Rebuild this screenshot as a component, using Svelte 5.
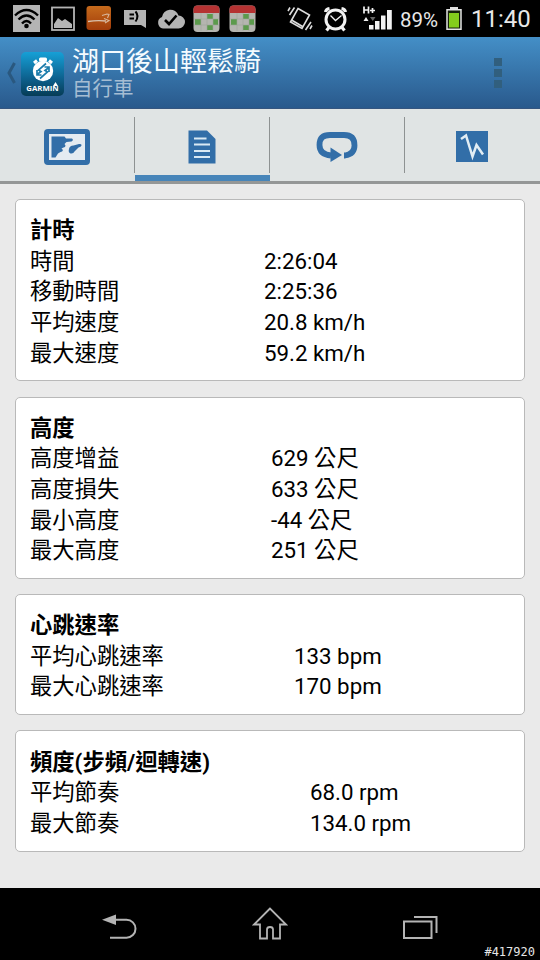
<script lang="ts">
	type Section = {
		title: string;
		labelWidth: number;
		rows: [string, string][];
	};

	const sections: Section[] = [
		{
			title: '計時',
			labelWidth: 234,
			rows: [
				['時間', '2:26:04'],
				['移動時間', '2:25:36'],
				['平均速度', '20.8 km/h'],
				['最大速度', '59.2 km/h'],
			],
		},
		{
			title: '高度',
			labelWidth: 241,
			rows: [
				['高度增益', '629 公尺'],
				['高度損失', '633 公尺'],
				['最小高度', '-44 公尺'],
				['最大高度', '251 公尺'],
			],
		},
		{
			title: '心跳速率',
			labelWidth: 264,
			rows: [
				['平均心跳速率', '133 bpm'],
				['最大心跳速率', '170 bpm'],
			],
		},
		{
			title: '頻度(步頻/迴轉速)',
			labelWidth: 280,
			rows: [
				['平均節奏', '68.0 rpm'],
				['最大節奏', '134.0 rpm'],
			],
		},
	];

	const tabs = ['map', 'details', 'laps', 'chart'];
	let activeTab = $state('details');
</script>

{#snippet calendar()}
	<svg width="28" height="28" viewBox="0 0 28 28">
		<rect x="0.5" y="0.5" width="26" height="26.5" rx="4" fill="#b5b5b0"/>
		<path d="M0.5 8V4.5a4 4 0 0 1 4-4h18a4 4 0 0 1 4 4V8z" fill="#b53232"/>
		<path d="M2 14h6v6H2zM14 9h6v5h-6zM20 14h5v6h-5zM14 20h6v5h-6z" fill="#5c9a4c"/>
		<path d="M8 8v18M14 8v18M20 8v18M1 14h25M1 20h25" stroke="#9fa69b" stroke-width="0.6"/>
	</svg>
{/snippet}

<div class="screen">
	<!-- Status bar -->
	<div class="status-bar">
		<div class="notifications">
			<svg width="28" height="28" viewBox="0 0 28 28">
				<rect width="27" height="27" fill="#b4b4b4"/>
				<g fill="none" stroke="#000" stroke-width="2.4">
					<path d="M2 10.5Q13.500 -0.5 25 10.5"/>
					<path d="M5.5 14.5Q13.500 6.5 21.5 14.5"/>
					<path d="M9 18.5Q13.500 13.5 18 18.5"/>
				</g>
				<circle cx="13.5" cy="21" r="2.3"/>
			</svg>
			<svg width="28" height="28" viewBox="0 0 28 28">
				<rect x="3" y="2.5" width="22" height="22.5" fill="none" stroke="#b4b4b4" stroke-width="1.8"/>
				<path d="M5 23v-4l4-6 4 3 3-2 7 5v4z" fill="#b4b4b4"/>
			</svg>
			<svg width="28" height="28" viewBox="0 0 28 28">
				<defs>
					<linearGradient id="orange" x1="0" y1="0" x2="0" y2="1">
						<stop offset="0" stop-color="#c56a1c"/>
						<stop offset="1" stop-color="#a13c0a"/>
					</linearGradient>
				</defs>
				<rect x="1.5" y="1" width="24.5" height="24" rx="3" fill="url(#orange)"/>
				<path d="M3 16.500Q12 15 21 16" fill="none" stroke="#d9c0ac" stroke-width="1.3"/>
				<path d="M19 13.500l5 2-4 2.500M17 10.500l5-1.500 2 0.500-1.500 3.500" fill="none" stroke="#d9b79c" stroke-width="1.1"/>
			</svg>
			<svg width="28" height="28" viewBox="0 0 28 28">
				<path d="M3 5h22v18l-5-3H3z" fill="#b4b4b4"/>
				<path d="M8.500 9.500h4.500M8.500 13.500h4.500M14.500 6.500q4 4.500 0 10" fill="none" stroke="#000" stroke-width="2"/>
			</svg>
			<svg width="28" height="28" viewBox="0 0 28 28">
				<path d="M6 23.500a6 6 0 0 1-1-11.500 8.500 8.500 0 0 1 16.500-1.500 6.500 6.500 0 0 1 0 13z" fill="#b4b4b4"/>
				<path d="M8 15l4 4 7.500-8.500" fill="none" stroke="#000" stroke-width="2.6"/>
			</svg>
			{@render calendar()}
			{@render calendar()}
		</div>

		<div class="system">
			<svg width="26" height="26" viewBox="0 0 26 26" fill="none" stroke="#ddd" stroke-width="1.6">
				<path d="M11 2.500l11.500 6.500-7.500 13.500L3.500 16zM4.500 14l11 6.500"/>
				<path d="M1 5l2-3.500M2.500 9l5-7.500M18.500 24l5.500-8M23 23l2-3.500"/>
			</svg>
			<svg class="alarm" width="26" height="26" viewBox="0 0 26 26" fill="none" stroke="#f2f2f2">
				<circle cx="12.5" cy="13.5" r="9.5" stroke-width="3"/>
				<path d="M2.500 6Q3 3 6.500 2.500M22.500 6Q22 3 18.500 2.500M6 21.500l-2.500 3M19 21.500l2.500 3" stroke-width="3.2"/>
				<path d="M7.500 9.500l5 5 6-5" stroke-width="1.3"/>
			</svg>
			<svg class="signal" width="30" height="26" viewBox="0 0 30 26">
				<g fill="none" stroke="#f2f2f2" stroke-width="1.7">
					<path d="M1 0.500v7M5.500 0.500v7M1 4h4.500M7 4.500h5M9.500 2v5"/>
				</g>
				<path d="M0.5 15l2.500-4 2.500 4z" fill="#eee"/>
				<path d="M7 11h5.500l-2.750 4z" fill="#666"/>
				<path d="M6 19h4.500v4.500H6zM12 15h4.500v8.500H12zM18 9.500h4.500v14H18zM24 4h4.800v19.500H24z" fill="#f2f2f2"/>
			</svg>
			<span class="percent">89%</span>
			<svg class="battery" width="16" height="24" viewBox="0 0 16 24">
				<path d="M4 0h8v3H4z" fill="#ddd"/>
				<rect x="1" y="2.75" width="14" height="19.5" fill="#16200a" stroke="#e4e4e4" stroke-width="1.5"/>
				<rect x="3" y="6" width="10" height="14.5" fill="#84cc1c"/>
			</svg>
			<span class="clock">11:40</span>
		</div>
	</div>

	<!-- Action bar -->
	<header class="action-bar">
		<svg class="back" width="10" height="22" viewBox="0 0 10 22">
			<path d="M8.500 1L3 11l5.500 10" fill="none" stroke="#2a587f" stroke-width="3"/>
		</svg>
		<div class="app-icon">
			<svg width="26" height="27" viewBox="0 0 26 27">
				<rect x="9" y="0.5" width="8" height="4" rx="1.5" fill="#fff"/>
				<path d="M4 6l3-2.500M22 6l-3-2.500" stroke="#fff" stroke-width="3"/>
				<circle cx="13" cy="14" r="10.2" fill="#fff"/>
				<path d="M16 6.500l-7.500 6.500 2.500 1.500-4 3M7 13v5h4.500M10 21.500l7.500-6.500-2.500-1.500 4-3M19 15v-5h-4.500" fill="none" stroke="#1b7cab" stroke-width="1.7"/>
			</svg>
			<span class="brand">GARMIN</span>
			<svg class="brand-mark" width="5" height="4" viewBox="0 0 5 4"><path d="M0 4l2.500-4L5 4z" fill="#fff"/></svg>
		</div>
		<div class="titles">
			<h1>湖口後山輕鬆騎</h1>
			<p>自行車</p>
		</div>
		<button class="overflow" aria-label="More options">
			<i></i><i></i><i></i>
		</button>
	</header>

	<!-- Tabs -->
	<nav class="tabs">
		{#each tabs as tab}
			<button class="tab" class:active={activeTab === tab} aria-label={tab} onclick={() => activeTab = tab}>
				{#if tab === 'map'}
					<svg width="46" height="36" viewBox="0 0 46 36">
						<rect x="2.5" y="2.5" width="41" height="31" rx="1.5" fill="#e4ebf1" stroke="#326ea8" stroke-width="5"/>
						<path d="M7.500 7.500h13l1.500 2h6q2 1.500-0.500 3l-5 0.500-2 2 1 1.500q0 2-2 2l-2 1 1.500 1.500q-0.500 2-2.500 2l-2.500 1.500-2.500 4H7.500z" fill="#326ea8"/>
						<path d="M25 20q0.500-3.500 4.500-3.500l5.500-1.500q3-0.500 2.500 1.500-0.500 1.500-3 2l-4 4q-1 2.500-4 2-2.500-1-1.500-4.500z" fill="#326ea8"/>
					</svg>
				{:else if tab === 'details'}
					<svg width="28" height="34" viewBox="0 0 28 34">
						<path d="M0.5 0.500h18.500L27.500 9v24.500h-27z" fill="#326ea8"/>
						<path d="M6 8.500h12.500M6 14.500h16M6 21h16M6 27h16" stroke="#d9e9f4" stroke-width="2"/>
					</svg>
				{:else if tab === 'laps'}
					<svg width="42" height="32" viewBox="0 0 42 32">
						<path d="M28 24.500h1q9.500-1.500 9.500-10Q38.500 4 28 4H14Q3.500 4 3.500 14q0 9.500 11.500 10.500" fill="none" stroke="#326ea8" stroke-width="5.8"/>
						<path d="M14.500 16.500L26 24l-11.500 7z" fill="#326ea8"/>
					</svg>
				{:else}
					<svg width="32" height="31" viewBox="0 0 32 31">
						<rect width="32" height="31" fill="#326ea8"/>
						<path d="M5 8l5-3.500 6.500 21 4-11.500 6.500 9.500" fill="none" stroke="#e2edf4" stroke-width="2.5"/>
					</svg>
				{/if}
			</button>
		{/each}
	</nav>

	<main>
		{#each sections as section}
			<section class="card">
				<h2>{section.title}</h2>
				{#each section.rows as [label, value]}
					<div class="row">
						<span style="width: {section.labelWidth}px">{label}</span>
						<span>{value}</span>
					</div>
				{/each}
			</section>
		{/each}
	</main>

	<!-- System navigation -->
	<footer class="nav-bar">
		<svg width="36" height="36" viewBox="0 0 36 36">
			<path d="M0 13.700L14 8.500v10.500z" fill="#b4b4b4"/>
			<path d="M13 13.700h11.500a9 9 0 0 1 0 18H8" fill="none" stroke="#b4b4b4" stroke-width="2"/>
		</svg>
		<svg width="36" height="36" viewBox="0 0 36 36">
			<path d="M18 2.500L2 18.500h6v14h7v-9q0-2.500 3-2.500t3 2.500v9h7v-14h6z" fill="none" stroke="#b4b4b4" stroke-width="1.8"/>
		</svg>
		<svg width="36" height="36" viewBox="0 0 36 36">
			<path d="M2 15.500h27.500v16.500H2zM12 11h22.500v16" fill="none" stroke="#b4b4b4" stroke-width="2"/>
		</svg>
		<span class="watermark">#417920</span>
	</footer>
</div>

<style>
	:global(body) {
		background: #000;
	}

	.screen {
		display: flex;
		flex-direction: column;
		width: 540px;
		height: 960px;
		overflow: hidden;
		background: #eaeaea;
		font-family: Roboto, 'Noto Sans CJK TC', sans-serif;
		color: #000;
	}

	button {
		padding: 0;
		border: none;
		background: none;
	}

	svg {
		display: block;
		flex-shrink: 0;
	}

	/* Status bar */
	.status-bar {
		display: flex;
		justify-content: space-between;
		flex-shrink: 0;
		height: 37px;
		padding: 0 8px 0 13px;
		box-sizing: border-box;
		background: #000;
		color: #e8e8e8;
	}

	.notifications {
		display: flex;
		gap: 8px;
		padding-top: 5px;
	}

	.system {
		display: flex;
		align-items: center;
		white-space: nowrap;
	}

	.alarm {
		margin-left: 10px;
	}

	.signal {
		margin-left: 14px;
	}

	.percent {
		width: 39px;
		margin-left: 7px;
		font-size: 20.5px;
		line-height: 37px;
		padding-top: 3px;
	}

	.battery {
		margin-left: 7px;
	}

	.clock {
		width: 61px;
		margin-left: 9px;
		font-size: 24px;
		line-height: 37px;
		padding-top: 2px;
	}

	/* Action bar */
	.action-bar {
		display: flex;
		align-items: center;
		flex-shrink: 0;
		height: 72px;
		padding: 0 38px 0 6px;
		box-sizing: border-box;
		border-bottom: 1px solid #35557f;
		background: linear-gradient(#448fc7, #29598c);
	}

	.app-icon {
		position: relative;
		display: flex;
		flex-direction: column;
		align-items: center;
		width: 43px;
		height: 44px;
		margin: 2px 0 0 5px;
		padding-top: 5px;
		box-sizing: border-box;
		border-radius: 5px;
		background: linear-gradient(#16a0d6, #0d618e 60%, #063c56);
	}

	.brand {
		font-family: 'Open Sans', sans-serif;
		font-size: 7.8px;
		font-weight: 700;
		line-height: 9px;
		color: #fff;
	}

	.brand-mark {
		position: absolute;
		right: 6px;
		top: 30px;
	}

	.titles {
		flex: 1;
		margin-left: 8px;
		padding-top: 4px;
	}

	h1,
	h2,
	p {
		margin: 0;
	}

	h1 {
		font-size: 27px;
		font-weight: 400;
		line-height: 30px;
		color: #f4fbff;
	}

	p {
		font-size: 20.5px;
		line-height: 25px;
		color: #a5bdd3;
	}

	.overflow {
		display: flex;
		flex-direction: column;
		gap: 3px;
		width: 8px;
	}

	.overflow i {
		width: 8px;
		height: 8px;
		background: #315f7e;
	}

	/* Tabs */
	.tabs {
		display: flex;
		flex-shrink: 0;
		height: 75px;
		box-sizing: border-box;
		border-bottom: 3px solid #959797;
		background: #e0e4e4;
	}

	.tab {
		position: relative;
		display: flex;
		flex: 1;
		align-items: center;
		justify-content: center;
		padding: 3px 1px 0 0;
	}

	.tab + .tab::before {
		content: '';
		position: absolute;
		left: -1px;
		top: 8px;
		width: 1px;
		height: 56px;
		background: #8e9292;
	}

	.tab.active::after {
		content: '';
		position: absolute;
		left: 0;
		right: 0;
		bottom: 0;
		height: 6px;
		background: #4785b9;
	}

	/* Cards */
	main {
		display: flex;
		flex: 1;
		flex-direction: column;
		gap: 15.2px;
		padding: 15px 15px 0;
	}

	.card {
		padding: 15.2px 14px 12.2px;
		border: 1px solid #b9b9b9;
		border-radius: 5px;
		background: #fff;
		font-size: 22.3px;
		line-height: 30.6px;
	}

	h2 {
		height: 30.6px;
		font-size: inherit;
		font-weight: 700;
	}

	.row {
		display: flex;
		height: 30.6px;
		white-space: nowrap;
	}

	/* Navigation bar */
	.nav-bar {
		position: relative;
		display: flex;
		justify-content: center;
		gap: 114px;
		flex-shrink: 0;
		height: 72px;
		padding-top: 18px;
		box-sizing: border-box;
		background: #000;
	}

	.watermark {
		position: absolute;
		right: 5px;
		bottom: 1px;
		font-family: 'DejaVu Sans Mono', monospace;
		font-size: 12px;
		line-height: 14px;
		color: #e6e6e6;
	}
</style>
